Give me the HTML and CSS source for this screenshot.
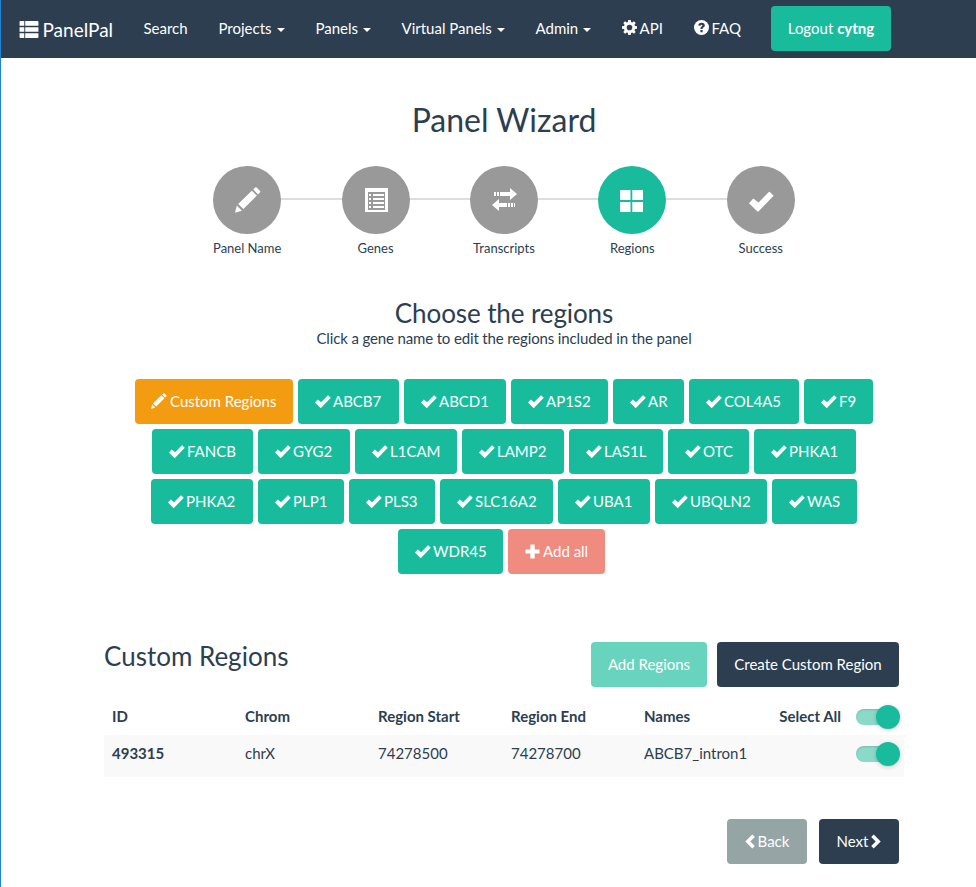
FILE: index.html
```html
<!DOCTYPE html>
<html lang="en">
<head>
<meta charset="utf-8">
<title>PanelPal</title>
<link rel="stylesheet" href="styles.css">
</head>
<body>
<svg class="sprite" aria-hidden="true">
  <symbol id="ok" viewBox="0 0 15 12"><path d="M0 7 2.6 4.2 5.7 6.6 11.9.3Q12.2 0 12.5.3L14.8 2.6 5.8 11.8Q5.3 12.2 4.9 11.8Z"/></symbol>
  <symbol id="pencil" viewBox="0 0 26 26"><path d="M0 25.8 1.8 18.5 6.9 23.7ZM3.2 17 16.8 3.8 21.8 8.6 8.4 22ZM18.2 2.5 20.2.5Q21 0 21.7.6L25.1 4Q25.6 4.6 25.1 5.2L23 7.4Z"/></symbol>
  <symbol id="list" viewBox="0 0 20 18"><path d="M0 1Q0 0 1 0H5V5H0ZM6 0H19Q20 0 20 1V5H6ZM0 6.5H5V11.5H0ZM6 6.5H20V11.5H6ZM0 13H5V18H1Q0 18 0 17ZM6 13H20V17Q20 18 19 18H6Z"/></symbol>
  <symbol id="cog" viewBox="0 0 16 16"><path fill-rule="evenodd" d="M6.7 0H9.3L9.7 2.2 10.9 2.7 12.7 1.4 14.6 3.3 13.3 5.1 13.8 6.3 16 6.7V9.3L13.8 9.7 13.3 10.9 14.6 12.7 12.7 14.6 10.9 13.3 9.7 13.8 9.3 16H6.7L6.3 13.8 5.1 13.3 3.3 14.6 1.4 12.7 2.7 10.9 2.2 9.7 0 9.3V6.7L2.2 6.3 2.7 5.1 1.4 3.3 3.3 1.4 5.1 2.7 6.3 2.2ZM8 5A3 3 0 1 0 8 11 3 3 0 1 0 8 5Z"/></symbol>
  <symbol id="question" viewBox="0 0 15 15"><circle cx="7.5" cy="7.5" r="7.5"/><path class="cut" d="M4.3 5.5Q4.5 2.7 7.6 2.7 10.8 2.8 10.8 5.4 10.8 6.8 9.3 7.6 8.6 8 8.6 9H6.4Q6.3 7.2 7.6 6.5 8.5 6 8.4 5.4 8.3 4.7 7.5 4.7 6.7 4.7 6.5 5.7ZM6.4 10.1H8.6V12.2H6.4Z"/></symbol>
  <symbol id="plus" viewBox="0 0 15 15"><path d="M5.3 1Q5.3.5 5.8.5H9.2Q9.7.5 9.7 1V5.5H14Q14.5 5.5 14.5 6V9Q14.5 9.5 14 9.5H9.7V14Q9.7 14.5 9.2 14.5H5.8Q5.3 14.5 5.3 14V9.5H1Q.5 9.5.5 9V6Q.5 5.5 1 5.5H5.3Z"/></symbol>
  <symbol id="left" viewBox="0 0 10 15"><path d="M7.3.5 9.8 3 5.3 7.5 9.8 12 7.3 14.5.3 7.5Z"/></symbol>
  <symbol id="right" viewBox="0 0 10 15"><path d="M2.7.5.2 3 4.7 7.5.2 12 2.7 14.5 9.7 7.5Z"/></symbol>
  <symbol id="list-alt" viewBox="0 0 23 24"><path fill-rule="evenodd" d="M0 0H23V24H0ZM3 4V22H20V4Z"/><path d="M4 6H6V8H4ZM8 6H19V8H8ZM4 10H6V12H4ZM8 10H19V12H8ZM4 14H6V16H4ZM8 14H19V16H8ZM4 18H6V20H4ZM8 18H19V20H8Z"/></symbol>
  <symbol id="transfer" viewBox="0 0 25 23"><path d="M2 4H4V8H2ZM5 4H7V8H5ZM8 4H18V0L25 6 18 12V8H8ZM0 17 7 11V15H15V19H7V23ZM16 15H18V19H16ZM19 15H21V19H19ZM22 15H23V19H22Z"/></symbol>
  <symbol id="large" viewBox="0 0 23 22"><path d="M0 0H10.5V10H0ZM12.3 0H23V10H12.3ZM0 12H10.5V22H0ZM12.3 12H23V22H12.3Z"/></symbol>
</svg>
<nav class="navbar">
  <a class="brand"><svg><use href="#list"/></svg><span>PanelPal</span></a>
  <a class="nav-link search">Search</a>
  <a class="nav-link projects">Projects<i class="caret"></i></a>
  <a class="nav-link panels">Panels<i class="caret"></i></a>
  <a class="nav-link virtual">Virtual Panels<i class="caret"></i></a>
  <a class="nav-link admin">Admin<i class="caret"></i></a>
  <a class="nav-link api"><svg><use href="#cog"/></svg>API</a>
  <a class="nav-link faq"><svg><use href="#question"/></svg>FAQ</a>
  <a class="btn logout">Logout&nbsp;<b>cytng</b></a>
</nav>
<main>
  <h1>Panel Wizard</h1>
  <ol class="steps">
    <li><span class="dot"><svg class="i-pencil"><use href="#pencil"/></svg></span>Panel Name</li>
    <li><span class="dot"><svg class="i-list"><use href="#list-alt"/></svg></span>Genes</li>
    <li><span class="dot"><svg class="i-transfer"><use href="#transfer"/></svg></span>Transcripts</li>
    <li><span class="dot active"><svg class="i-large"><use href="#large"/></svg></span>Regions</li>
    <li><span class="dot"><svg class="i-ok"><use href="#ok"/></svg></span>Success</li>
  </ol>
  <h2>Choose the regions</h2>
  <p class="lead">Click a gene name to edit the regions included in the panel</p>
  <div class="genes">
    <a class="btn custom"><svg><use href="#pencil"/></svg>Custom Regions</a>
    <a class="btn w101"><svg><use href="#ok"/></svg>ABCB7</a>
    <a class="btn w102"><svg><use href="#ok"/></svg>ABCD1</a>
    <a class="btn w97"><svg><use href="#ok"/></svg>AP1S2</a>
    <a class="btn w71"><svg><use href="#ok"/></svg>AR</a>
    <a class="btn w110"><svg><use href="#ok"/></svg>COL4A5</a>
    <a class="btn w69"><svg><use href="#ok"/></svg>F9</a>
    <a class="btn w101"><svg><use href="#ok"/></svg>FANCB</a>
    <a class="btn w92"><svg><use href="#ok"/></svg>GYG2</a>
    <a class="btn w102"><svg><use href="#ok"/></svg>L1CAM</a>
    <a class="btn w102"><svg><use href="#ok"/></svg>LAMP2</a>
    <a class="btn w94"><svg><use href="#ok"/></svg>LAS1L</a>
    <a class="btn w81"><svg><use href="#ok"/></svg>OTC</a>
    <a class="btn w102"><svg><use href="#ok"/></svg>PHKA1</a>
    <a class="btn w102"><svg><use href="#ok"/></svg>PHKA2</a>
    <a class="btn w86"><svg><use href="#ok"/></svg>PLP1</a>
    <a class="btn w86"><svg><use href="#ok"/></svg>PLS3</a>
    <a class="btn w113"><svg><use href="#ok"/></svg>SLC16A2</a>
    <a class="btn w92"><svg><use href="#ok"/></svg>UBA1</a>
    <a class="btn w112"><svg><use href="#ok"/></svg>UBQLN2</a>
    <a class="btn w85"><svg><use href="#ok"/></svg>WAS</a>
    <a class="btn w105"><svg><use href="#ok"/></svg>WDR45</a>
    <a class="btn add-all"><svg><use href="#plus"/></svg>Add all</a>
  </div>
  <div class="section-head">
    <h2>Custom Regions</h2>
    <a class="btn add-regions">Add Regions</a>
    <a class="btn dark create">Create Custom Region</a>
  </div>
  <div class="row head"><span>ID</span><span>Chrom</span><span>Region Start</span><span>Region End</span><span>Names</span><span class="last">Select All<i class="toggle"></i></span></div>
  <div class="row data"><b>493315</b><span>chrX</span><span>74278500</span><span>74278700</span><span>ABCB7_intron1</span><span class="last"><i class="toggle"></i></span></div>
  <div class="pager">
    <a class="btn back"><svg><use href="#left"/></svg>Back</a>
    <a class="btn dark next">Next<svg><use href="#right"/></svg></a>
  </div>
</main>
</body>
</html>
```
FILE: styles.css
```css
* { box-sizing: border-box; }
body { margin: 0; height: 887px; overflow: hidden; border-left: 1px solid #1f83d5; background: #fff; color: #2c3e50; font: 15px/21px Lato, sans-serif; }
svg { fill: currentColor; flex: none; }
.sprite { position: absolute; width: 0; height: 0; }
.navbar { height: 58px; background: #2c3e50; color: #fff; display: flex; align-items: center; padding: 0 0 2px 17.5px; margin-left: -1px; border-left: 1px solid #1f83d5; }
.brand { display: flex; align-items: center; width: 125px; font-size: 19px; padding-top: 2px; }
.brand svg { width: 20px; height: 17px; margin-right: 4px; }
.nav-link { display: flex; align-items: center; white-space: nowrap; }
.nav-link svg { width: 15px; height: 15px; margin: -2px 3px 0 0; }
.cut { fill: #2c3e50; }
.search { width: 75px; }
.projects { width: 97px; }
.panels { width: 86px; }
.virtual { width: 134px; }
.admin { width: 86px; }
.api { width: 72px; }
.faq { width: 77.5px; }
.caret { border: 4px solid transparent; border-top-color: #fff; border-bottom: 0; margin: 3px 0 0 5px; }
.btn { display: inline-flex; align-items: center; justify-content: center; height: 45px; padding: 0 17px; border-radius: 4px; background: #18bc9c; color: #fff; white-space: nowrap; }
.logout { width: 120px; padding: 0; }
main { width: 800px; margin: 0 0 0 103px; }
h1, h2 { margin: 0; font-weight: 400; text-align: center; }
h1 { font-size: 32px; line-height: 40px; margin-top: 42px; }
h2 { font-size: 26px; line-height: 30px; }
.steps { display: flex; justify-content: space-between; list-style: none; margin: 26px 79px 0; padding: 0; }
.steps li { position: relative; width: 128.4px; text-align: center; font-size: 13px; line-height: 18px; }
.steps li::before { content: ""; position: absolute; top: 32px; left: -50%; width: 100%; height: 2px; background: #ddd; }
.steps li:first-child::before { display: none; }
.dot { position: relative; z-index: 1; display: flex; align-items: center; justify-content: center; width: 68px; height: 68px; margin: 0 auto 5px; border-radius: 50%; background: #999; color: #fff; }
.dot.active { background: #18bc9c; }
.i-pencil { width: 26px; height: 26px; margin-left: 2px; }
.i-list { width: 23px; height: 24px; margin-left: 2px; }
.i-transfer { width: 25px; height: 23px; margin: -2px 0 0 1px; }
.i-large { width: 23px; height: 22px; margin: 2px 1px 0 0; }
.i-ok { width: 25px; height: 21px; margin: 2px 0 0 2px; }
.steps + h2 { margin-top: 41px; letter-spacing: -.1px; }
.lead { margin: 0; text-align: center; letter-spacing: -.14px; }
.genes { display: flex; flex-wrap: wrap; justify-content: center; gap: 5px; margin-top: 30px; }
.genes .btn { justify-content: flex-start; padding-right: 0; }
.genes svg { width: 16px; height: 13px; margin: 0 2px 0 0; }
.w69 { width: 69px; }
.w71 { width: 71px; }
.w81 { width: 81px; }
.w85 { width: 85px; }
.w86 { width: 86px; }
.w92 { width: 92px; }
.w94 { width: 94px; }
.w97 { width: 97px; }
.w101 { width: 101px; }
.w102 { width: 102px; }
.w105 { width: 105px; }
.w110 { width: 110px; }
.w112 { width: 112px; }
.w113 { width: 113px; }
.custom { background: #f39c12; width: 158px; }
.genes .custom svg { height: 16px; margin: -2px 3px 0 -1px; }
.add-all { background: #f08b80; margin-right: 5px; width: 97px; }
.genes .add-all svg { width: 15px; height: 15px; margin-right: 3px; }
.section-head { display: flex; margin-top: 68px; padding-right: 5px; gap: 10px; }
.section-head h2 { margin: -1px auto 0 0; }
.add-regions { background: #69d4be; width: 116px; padding: 0; }
.dark { background: #2c3e50; }
.create { width: 182px; padding: 0; }
.row { display: grid; grid-template-columns: repeat(5, 133px) 1fr; }
.row > * { padding-left: 8px; }
.head { font-weight: 700; line-height: 21px; margin-top: 19px; height: 29px; }
.data { background: #f9f9f9; height: 42px; padding-top: 8px; }
.last { display: flex; justify-content: flex-end; padding-right: 4px; }
.toggle { position: relative; width: 40px; height: 16px; margin: 3px 4px 0 15px; border-radius: 8px; background: #8bd9c9; box-shadow: inset 0 1px 2px #0002; }
.toggle::after { content: ""; position: absolute; width: 24px; height: 24px; top: -4px; right: -4px; border-radius: 50%; background: #18bc9c; box-shadow: 0 1px 4px #0003; }
.pager { display: flex; justify-content: flex-end; gap: 12px; padding-right: 5px; margin-top: 42px; }
.pager .btn { width: 80px; padding: 0; }
.pager svg { width: 10px; height: 15px; }
.back { background: #95a5a6; }
.back svg { margin-right: 3px; }
.next svg { margin-left: 3px; }
```
